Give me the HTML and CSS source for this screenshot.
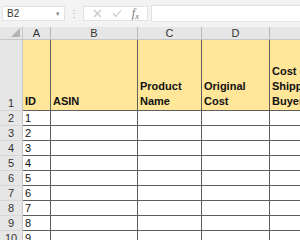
FILE: index.html
```html
<!DOCTYPE html>
<html lang="en">
<head>
    <meta charset="UTF-8" />
    <meta name="viewport" content="width=device-width, initial-scale=1" />
    <title>Sheet</title>
    <link rel="stylesheet" href="styles.css">
</head>
<body>

<div class="excel">
    <div class="formula-bar">
        <div class="name-box">
            <span>B2</span>
            <span class="caret">&#9662;</span>
        </div>
        <div class="grip">&#8942;</div>
        <div class="fx-box">
            <svg width="9" height="9" viewBox="0 0 9 9" aria-hidden="true">
                <path d="M1 1 L8 8 M8 1 L1 8" stroke="#c4c4c4" stroke-width="1.1" fill="none" />
            </svg>
            <svg width="10" height="9" viewBox="0 0 10 9" aria-hidden="true">
                <path d="M1 4.5 L3.8 7.5 L9 1.5" stroke="#c4c4c4" stroke-width="1.1" fill="none" />
            </svg>
            <span class="fx">f<span class="fx-x">x</span></span>
        </div>
        <div class="formula-input"></div>
    </div>

    <div class="sheet">
        <div class="corner">
            <svg width="9" height="9" viewBox="0 0 9 9" aria-hidden="true">
                <path d="M9 0 L9 9 L0 9 Z" fill="#b4b4b4" />
            </svg>
        </div>
        <div class="col-head">A</div>
        <div class="col-head">B</div>
        <div class="col-head">C</div>
        <div class="col-head">D</div>
        <div class="col-head">E</div>

        <div class="row-head">1</div>
        <div class="cell head">ID</div>
        <div class="cell head">ASIN</div>
        <div class="cell head">Product Name</div>
        <div class="cell head">Original Cost</div>
        <div class="cell head">Cost of Shipping to Buyer</div>

        <div class="row-head">2</div>
        <div class="cell">1</div><div class="cell"></div><div class="cell"></div><div class="cell"></div><div class="cell"></div>
        <div class="row-head">3</div>
        <div class="cell">2</div><div class="cell"></div><div class="cell"></div><div class="cell"></div><div class="cell"></div>
        <div class="row-head">4</div>
        <div class="cell">3</div><div class="cell"></div><div class="cell"></div><div class="cell"></div><div class="cell"></div>
        <div class="row-head">5</div>
        <div class="cell">4</div><div class="cell"></div><div class="cell"></div><div class="cell"></div><div class="cell"></div>
        <div class="row-head">6</div>
        <div class="cell">5</div><div class="cell"></div><div class="cell"></div><div class="cell"></div><div class="cell"></div>
        <div class="row-head">7</div>
        <div class="cell">6</div><div class="cell"></div><div class="cell"></div><div class="cell"></div><div class="cell"></div>
        <div class="row-head">8</div>
        <div class="cell">7</div><div class="cell"></div><div class="cell"></div><div class="cell"></div><div class="cell"></div>
        <div class="row-head">9</div>
        <div class="cell">8</div><div class="cell"></div><div class="cell"></div><div class="cell"></div><div class="cell"></div>
        <div class="row-head">10</div>
        <div class="cell">9</div><div class="cell"></div><div class="cell"></div><div class="cell"></div><div class="cell"></div>
    </div>
</div>

</body>
</html>
```

FILE: styles.css
```css
html, body {
  margin: 0;
  overflow: hidden;
}
body {
  background: #f3f3f3;
  font-family: 'Liberation Sans', Arial, sans-serif;
  color: #222;
}
.excel {
  width: 300px;
  height: 240px;
  overflow: hidden;
}
.formula-bar {
  display: flex;
  align-items: center;
  height: 27px;
  padding: 0 0 0 2px;
  box-sizing: border-box;
  background: #f3f3f3;
}
.name-box {
  width: 63px;
  height: 15px;
  box-sizing: border-box;
  background: #fff;
  border: 1px solid #e2e2e2;
  display: flex;
  align-items: center;
  justify-content: space-between;
  padding: 0 4px 0 4px;
  font-size: 10px;
  color: #333;
}
.caret {
  font-size: 7px;
  color: #888;
}
.grip {
  width: 18px;
  text-align: center;
  font-size: 10px;
  color: #aaa;
}
.fx-box {
  width: 65px;
  height: 15px;
  box-sizing: border-box;
  background: #fff;
  border: 1px solid #e2e2e2;
  display: flex;
  align-items: center;
  justify-content: space-around;
  padding: 0 3px 0 4px;
}
.fx {
  font-family: 'Liberation Serif', serif;
  font-style: italic;
  font-size: 12px;
  line-height: 12px;
  color: #777;
}
.fx-x {
  font-size: 9px;
  position: relative;
  top: 2px;
}
.formula-input {
  flex: 1;
  height: 15px;
  margin-left: 3px;
  background: #fff;
  border: 1px solid #e2e2e2;
  border-right: none;
}
.sheet {
  display: grid;
  grid-template-columns: 23px 28px 87px 64px 68px 80px;
  grid-template-rows: 13px 71px repeat(9, 15px);
  width: 350px;
}
.corner {
  background: #e6e6e6;
  border-right: 1px solid #c6c6c6;
  border-bottom: 1px solid #c6c6c6;
  box-sizing: border-box;
  display: flex;
  align-items: flex-end;
  justify-content: flex-end;
  padding: 0 2px 2px 0;
}
.corner svg {
  display: block;
}
.col-head {
  background: #e6e6e6;
  border-right: 1px solid #b8b8b8;
  border-bottom: 1px solid #c6c6c6;
  box-sizing: border-box;
  text-align: center;
  font-size: 11px;
  line-height: 13px;
  color: #333;
}
.row-head {
  background: #e6e6e6;
  border-right: 1px solid #c6c6c6;
  border-bottom: 1px solid #d6d6d6;
  box-sizing: border-box;
  text-align: center;
  font-size: 11px;
  line-height: 14px;
  color: #333;
  display: flex;
  flex-direction: column;
  justify-content: flex-end;
}
.cell {
  background: #fff;
  border-right: 1px solid #5e5e5e;
  border-bottom: 1px solid #5e5e5e;
  box-sizing: border-box;
  padding-left: 2px;
  font-size: 11px;
  line-height: 14px;
  color: #111;
  overflow: hidden;
}
.cell.head {
  background: #ffe699;
  font-weight: bold;
  line-height: 15px;
  display: flex;
  flex-direction: column;
  justify-content: flex-end;
  padding-bottom: 1px;
}
```
